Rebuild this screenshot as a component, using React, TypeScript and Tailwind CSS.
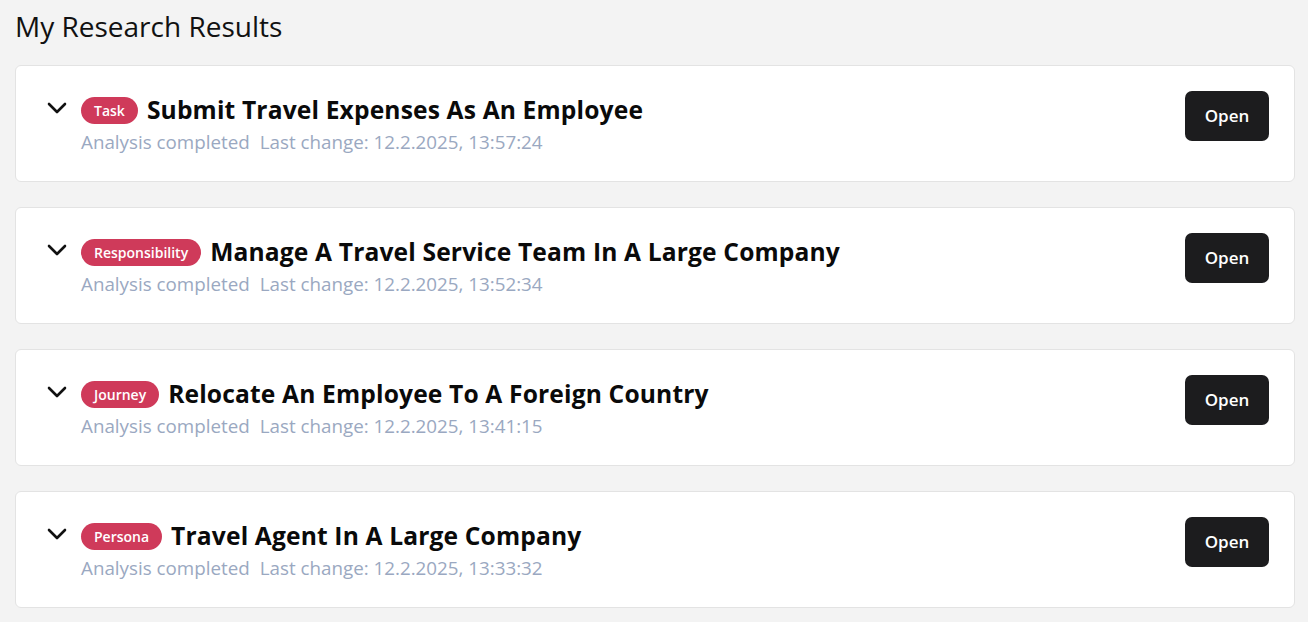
import React from "react";

const items = [
  { tag: "Task", title: "Submit Travel Expenses As An Employee", time: "12.2.2025, 13:57:24" },
  { tag: "Responsibility", title: "Manage A Travel Service Team In A Large Company", time: "12.2.2025, 13:52:34" },
  { tag: "Journey", title: "Relocate An Employee To A Foreign Country", time: "12.2.2025, 13:41:15" },
  { tag: "Persona", title: "Travel Agent In A Large Company", time: "12.2.2025, 13:33:32" },
];

function Chevron() {
  return (
    <svg width="20" height="12" viewBox="0 0 20 12" fill="none" className="shrink-0">
      <path d="M2 2l8 8 8-8" stroke="#111" strokeWidth="2.6" strokeLinecap="round" strokeLinejoin="round" />
    </svg>
  );
}

export default function App() {
  return (
    <div
      className="min-h-screen bg-[#f3f3f3] pl-[15px] pr-[13px] pt-[7px] pb-[14px]"
      style={{ fontFamily: '"Open Sans", "Noto Sans", sans-serif' }}
    >
      <h1 className="text-[28px] leading-[38px] text-[#111] font-normal">My Research Results</h1>
      <div className="mt-[20px] flex flex-col gap-[25px]">
        {items.map((it) => (
          <div
            key={it.title}
            className="h-[117px] bg-white border border-[#e3e3e3] rounded-[6px] pl-[31px] pr-[25px] pt-[25px] flex items-start justify-between"
          >
            <div className="flex items-start gap-[14px] pt-[3px]">
              <div className="pt-[8px]">
                <Chevron />
              </div>
              <div className="flex flex-col">
                <div className="flex items-center gap-[9px]">
                  <span className="rounded-full bg-[#cf3a5a] text-white text-[14px] font-semibold px-[13px] h-[27px] leading-[27px]">
                    {it.tag}
                  </span>
                  <span className="text-[24.6px] tracking-[0.15px] font-bold text-[#0a0a0a] leading-[32px]">{it.title}</span>
                </div>
                <div className="text-[18.8px] leading-[24px] text-[#9aa8c1] mt-[4px] flex gap-[10px]">
                  <span>Analysis completed</span>
                  <span>Last change: {it.time}</span>
                </div>
              </div>
            </div>
            <button className="w-[84px] h-[50px] bg-[#1c1c1e] text-white rounded-[7px] text-[17px] font-semibold">
              Open
            </button>
          </div>
        ))}
      </div>
    </div>
  );
}
